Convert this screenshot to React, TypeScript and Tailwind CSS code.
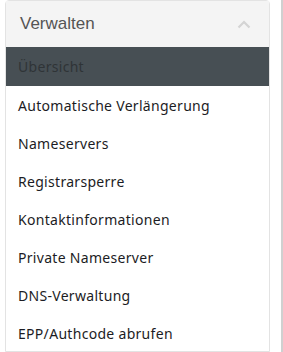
import React from 'react';

const items = [
    'Automatische Verlängerung',
    'Nameservers',
    'Registrarsperre',
    'Kontaktinformationen',
    'Private Nameserver',
    'DNS-Verwaltung',
    'EPP/Authcode abrufen',
];

export default function App() {
    return (
        <div className="w-[283px] h-[352px] bg-white flex overflow-hidden">
            <div className="w-[5px]" />
            {/* Manage panel */}
            <div className="w-[265px] border border-[#e3e3e3] rounded-t-[4px] bg-white">
                <div className="h-[46px] bg-[#f4f4f4] flex items-center justify-between pl-[14px] pr-[18px]">
                    <span className="text-[17px] text-[#555] font-['Liberation_Sans',sans-serif]">Verwalten</span>
                    <svg width="14" height="9" viewBox="0 0 14 9" fill="none">
                        <path d="M1.5 7.5 7 2l5.5 5.5" stroke="#d4d4d4" strokeWidth="2.2" />
                    </svg>
                </div>
                <div className="font-['Noto_Sans',sans-serif] text-[14px] tracking-[0.3px]">
                    <div className="h-[39px] bg-[#474f54] flex items-center pl-[12px] text-[#2f3437]">Übersicht</div>
                    {items.map(label => (
                        <div key={label} className="h-[38px] flex items-center pl-[12px] text-[#1c1c24]">
                            {label}
                        </div>
                    ))}
                </div>
            </div>
            <div className="w-[11px]" />
            <div className="w-[2px] bg-[#d0d0d0]" />
        </div>
    );
}
